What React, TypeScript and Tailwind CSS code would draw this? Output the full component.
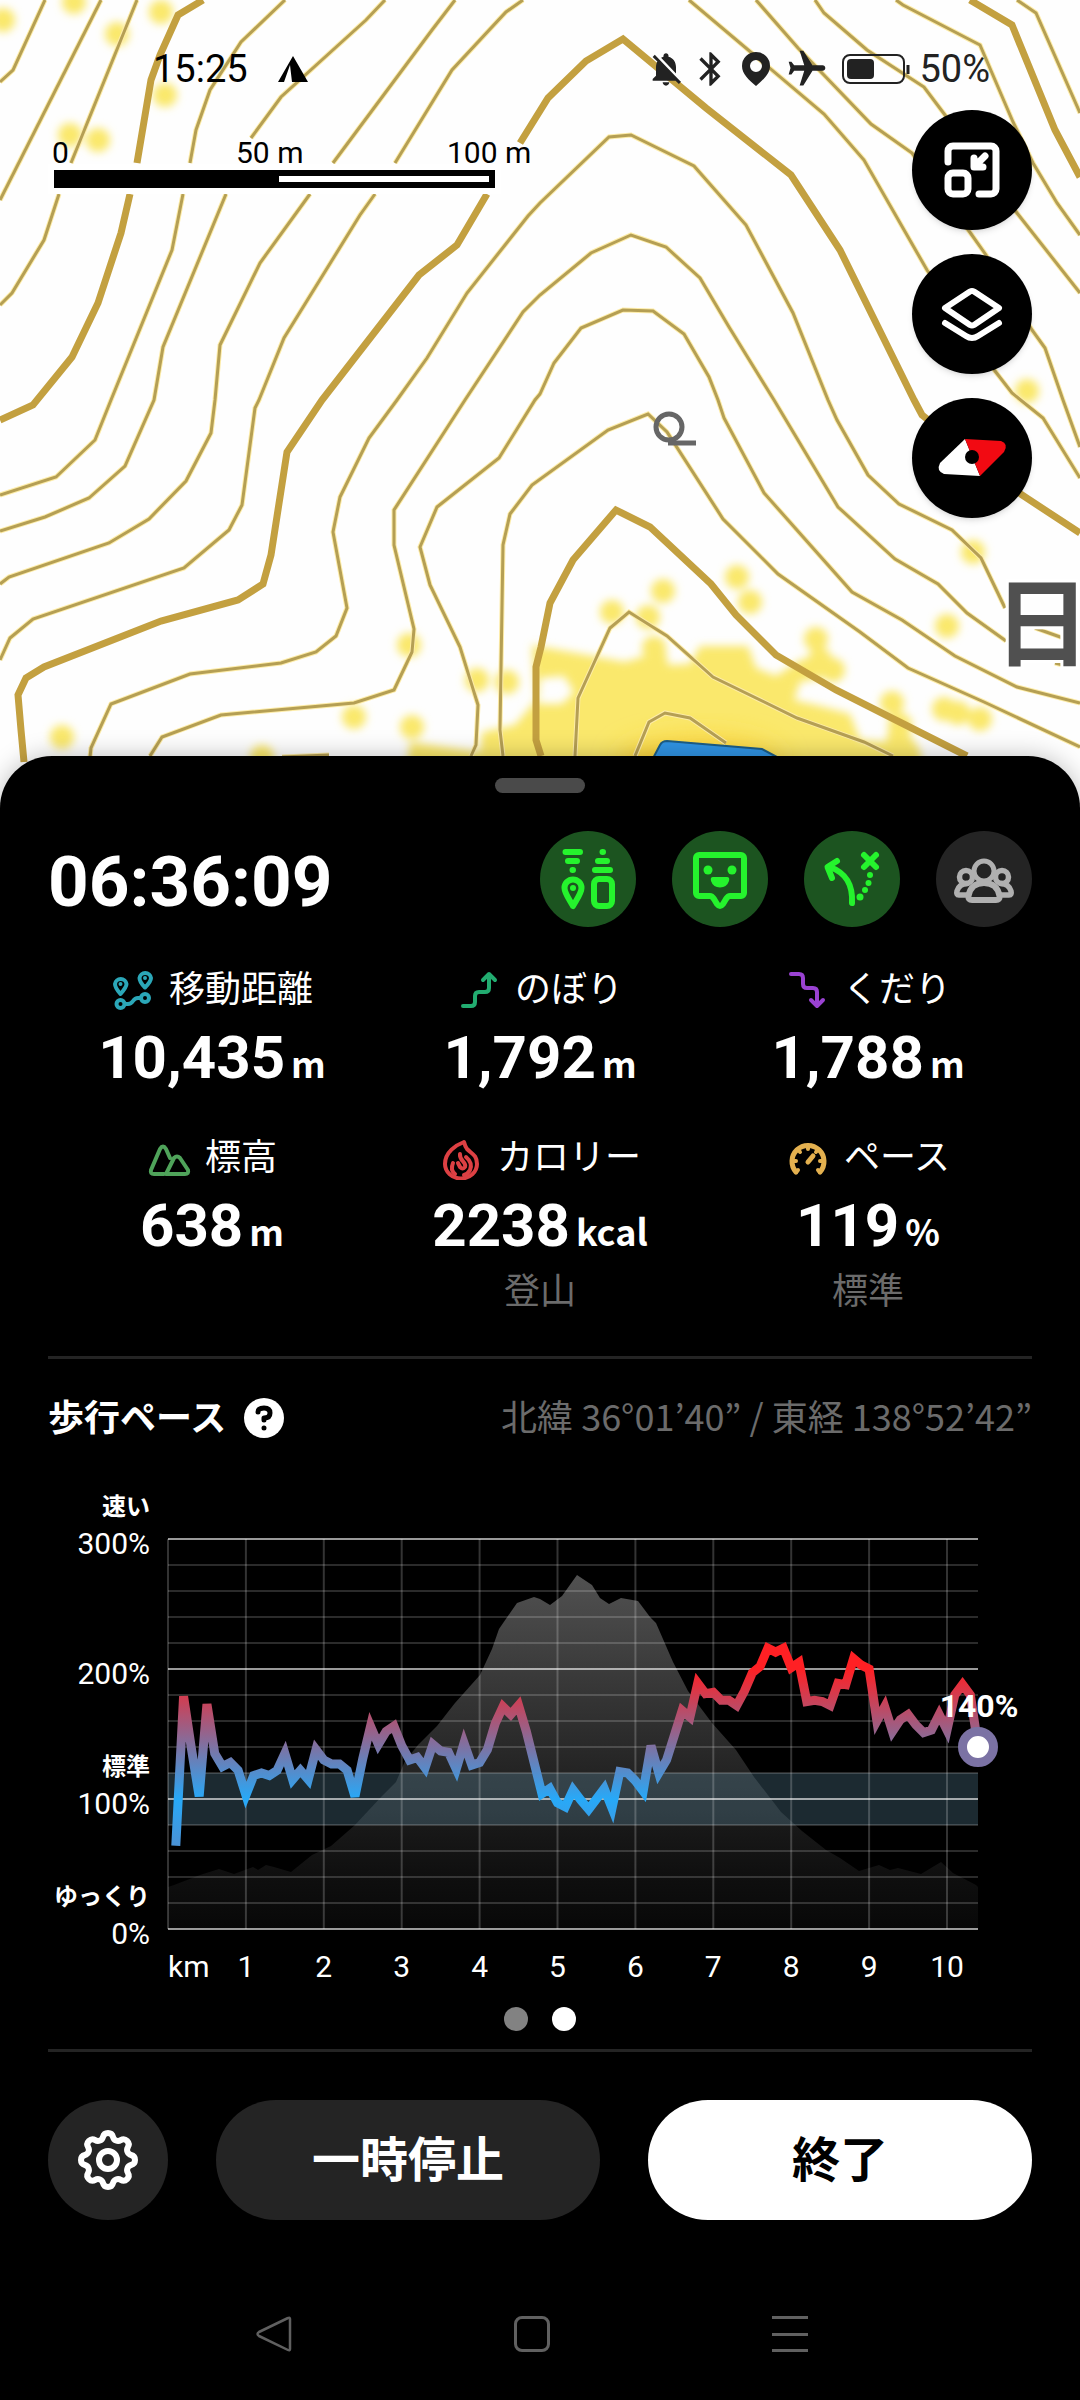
import type { ReactNode } from "react";
import { MdBluetooth, MdFlight, MdNotificationsOff } from "react-icons/md";
import { TbSettings } from "react-icons/tb";

const thinContours = [
    "M45 0L13 70L0 82",
    "M101 0L0 200",
    "M137 0L71 163M59 194L44 240L12 293L0 305",
    "M285 0L241 42L210 90L196 130L190 163M183 194L172 250L111 400L95 440L56 477L0 495",
    "M385 0L366 20L281 97L251 138M226 194L163 347L154 400L125 466L89 498L45 517L0 531",
    "M455 0L432 30L333 163M310 194L260 263L220 345L215 400L211 433L186 481L149 519L109 543L9 577L0 584",
    "M523 0L506 12L452 70L395 163M375 194L360 215L284 338L259 400L255 408L242 505L229 530L184 568L33 619L10 638L0 660",
    "M90 757L91 748L111 704L190 674L281 663L316 652L336 636L347 608L333 532L340 497L369 438L397 400L427 358L467 293L528 216L540 203L609 137L631 135L694 166L746 225L793 313L828 400L837 420L868 475L899 504L952 530L981 558L1005 608",
    "M150 756L162 737L221 715L354 703L394 690L412 652L414 629L394 545L394 510L465 400L523 312L540 295L591 253L631 235L666 247L700 278L729 327L774 400L838 507L895 559L938 584L967 613L1006 641M1035 628L1063 638",
    "M471 756L476 745L478 705L460 647L430 585L420 547L437 507L499 458L535 400L540 394L554 363L581 328L623 310L653 311L684 334L709 377L718 400L724 418L764 493L852 592L902 620L955 656L1017 687L1080 703",
    "M503 756L500 730L503 545L510 514L532 485L608 430L648 414L667 432L723 519L778 574L860 632L908 668L984 702L1080 747",
    "M575 756L578 698L610 628L629 612L667 636L713 677L797 718L864 742L893 756",
    "M635 756L649 722L665 713L690 718L726 743",
    "M689 0L824 114L864 160L927 270L995 371L1012 393L1043 418L1080 478",
    "M756 0L798 48L871 124L912 153L969 231L986 255L1032 330L1045 348L1063 400L1080 447",
    "M815 0L824 13L867 50L924 87L945 115L1017 213L1080 293",
    "M896 0L903 5L980 45L1013 122L1033 163L1057 203L1080 235",
    "M1017 0L1036 13L1080 113",
    "M282 757L329 755M1055 663L1063 665",
];

const thickContours = [
    "M203 0L178 15L160 55L151 80L137 163M130 194L121 233L98 303L72 357L33 405L0 420",
    "M24 762L21 730L18 695L26 678L44 667L161 621L238 600L263 584L271 555L287 452L322 400L419 275L457 245L487 194M520 143L548 98L586 61L623 39L706 108L791 175L840 250L914 400L922 415L1022 495L1080 533",
    "M541 756L536 740L536 667L541 647L550 603L573 560L616 510L650 527L711 584L736 615L776 655L836 690L967 756",
    "M970 0L1012 25L1055 130L1080 177",
];

const trackSpots = [
    [3, 20], [74, 2], [117, 34], [161, 12], [165, 95], [70, 135], [98, 140], [409, 645], [354, 717],
    [62, 737], [412, 727], [477, 680], [507, 682], [262, 757], [663, 591], [737, 577], [750, 602],
    [816, 639], [947, 626], [973, 552], [892, 703], [900, 725], [944, 709], [958, 713], [980, 719],
    [1027, 391], [612, 612], [648, 617], [654, 648], [833, 670], [820, 660],
];

function MapCanvas() {
    return (
        <svg
            className="absolute inset-0 h-full w-full"
            viewBox="0 0 1080 820"
            preserveAspectRatio="xMidYMin slice"
            aria-hidden="true"
        >
            <defs>
                <filter id="soft" x="-20%" y="-20%" width="140%" height="140%">
                    <feGaussianBlur stdDeviation="4" />
                </filter>
                <filter id="glow" x="-50%" y="-50%" width="200%" height="200%">
                    <feGaussianBlur stdDeviation="14" />
                </filter>
            </defs>
            <g fill="#fae86c" filter="url(#soft)">
                {trackSpots.map(([x, y]) => (
                    <circle key={`${x}-${y}`} cx={x} cy={y} r="12" />
                ))}
                <path
                    fillRule="evenodd"
                    d="M410 742L480 752L482 732L515 725L536 700L532 645L592 656L625 662L645 656L652 640L664 640L668 665L690 664L700 646L748 646L756 668L776 676L800 660L830 652L832 676L800 682L794 700L820 706L850 714L860 740L886 742L892 716L906 730L920 750L930 820H400zM540 678L564 676L574 692L562 704L538 704z"
                />
            </g>
            <ellipse cx="700" cy="765" rx="80" ry="26" fill="#fbd030" filter="url(#glow)" />
            <g fill="none" stroke="#fdeca8" strokeWidth="5">
                {thinContours.map((d) => <path key={d} d={d} />)}
            </g>
            <g fill="none" stroke="#b59f54" strokeWidth="3">
                {thinContours.map((d) => <path key={d} d={d} />)}
            </g>
            <g fill="none" stroke="#c3a040" strokeWidth="7">
                {thickContours.map((d) => <path key={d} d={d} />)}
            </g>
            <path d="M650 764L660 745Q662 741 667 741L762 749L790 764z" fill="#2f93e3" stroke="#1c5d86" strokeWidth="2" />
            <g fill="none" stroke="#666" strokeWidth="5">
                <circle cx="669" cy="427" r="13" />
                <path d="M668 443H696" />
            </g>
            <text
                x="1042"
                y="658"
                textAnchor="middle"
                fontSize="96"
                fontWeight="700"
                fill="#505050"
                stroke="#fff"
                strokeWidth="6"
                paintOrder="stroke"
                className="font-['Noto_Sans_CJK_JP',sans-serif]"
            >
                日
            </text>
        </svg>
    );
}

function StatusBar() {
    return (
        <header className="flex h-[110px] items-center justify-between pt-7 pr-[90px] pl-[153px] text-[38px] text-black">
            <div className="flex items-center gap-[30px]">
                <span>15:25</span>
                <svg width="30" height="27" viewBox="0 0 30 27" aria-hidden="true">
                    <path d="M15 0L30 26H14L12 9L6 26H0z" />
                </svg>
            </div>
            <div className="flex items-center gap-[5px] text-[#222]">
                <MdNotificationsOff size={40} />
                <MdBluetooth size={40} />
                <svg width="40" height="40" viewBox="0 0 40 40" fill="currentColor" aria-hidden="true">
                    <path fillRule="evenodd" d="M20 3a14 14 0 0 1 14 14c0 8-7 14-14 20C13 31 6 25 6 17A14 14 0 0 1 20 3zm0 8a6 6 0 1 0 0 12a6 6 0 0 0 0-12z" />
                </svg>
                <MdFlight size={44} className="ml-1 rotate-90" />
                <svg className="ml-2" width="68" height="30" viewBox="0 0 68 30" fill="none" stroke="currentColor" aria-hidden="true">
                    <rect x="1" y="1" width="61" height="28" rx="7" strokeWidth="2" />
                    <path d="M66 11V20" strokeWidth="3" />
                    <rect x="5" y="5" width="27" height="20" rx="4" fill="currentColor" stroke="none" />
                </svg>
                <span className="ml-1">50%</span>
            </div>
        </header>
    );
}

function ScaleBar() {
    return (
        <div className="ml-[52px] text-3xl leading-[34px] text-black">
            <div className="flex">
                <span className="w-[184px]">0</span>
                <span className="w-[211px]">50 m</span>
                <span>100 m</span>
            </div>
            <div className="ml-0.5 flex h-[18px] w-[441px] justify-end bg-black p-1.5 ring-6 ring-white">
                <div className="w-[210px] bg-white" />
            </div>
        </div>
    );
}

function MapButton({ label, children }: { label: string; children: ReactNode }) {
    return (
        <button type="button" aria-label={label} className="size-[120px] rounded-full bg-black shadow-md">
            <svg viewBox="0 0 120 120" fill="none" stroke="#fff" strokeWidth="7" strokeLinecap="round" strokeLinejoin="round">
                {children}
            </svg>
        </button>
    );
}

function MapButtons() {
    return (
        <div className="flex flex-col gap-6 pr-12">
            <MapButton label="縮小">
                <path d="M36 52V41a5 5 0 0 1 5-5H79a5 5 0 0 1 5 5V79a5 5 0 0 1-5 5H67" />
                <rect x="36" y="63" width="20" height="21" rx="5" />
                <path d="M73 46L63 56M62 48V57H71" />
            </MapButton>
            <MapButton label="レイヤー">
                <path d="M58 37.5a4 4 0 0 1 4 0L87 54L62 71a4 4 0 0 1-4 0L33 54z" strokeWidth="6" />
                <path d="M33 69L54 82q6 4 12 0L87 69" strokeWidth="6" />
            </MapButton>
            <MapButton label="コンパス">
                <g stroke="none">
                    <path d="M53 41L68 78L32 76q-8-3-4-11z" fill="#fff" />
                    <path d="M53 41L89 43q8 3 3 11L68 78z" fill="#f20a12" />
                    <circle cx="60" cy="59" r="7" fill="#000" />
                </g>
            </MapButton>
        </div>
    );
}

function ModeButton({ label, active = true, children }: { label: string; active?: boolean; children: ReactNode }) {
    return (
        <button
            type="button"
            aria-label={label}
            className={`size-24 rounded-full ${active ? "bg-[#1c5420] text-[#25f32d]" : "bg-[#242424] text-[#b0b0b0]"}`}
        >
            <svg viewBox="0 0 96 96" fill="none" stroke="currentColor" strokeWidth="6" strokeLinecap="round" strokeLinejoin="round">
                {children}
            </svg>
        </button>
    );
}

function Stat({ label, value, unit, note, icon }: { label: string; value: string; unit: string; note?: string; icon: ReactNode }) {
    return (
        <div className="flex flex-col items-center">
            <div className="flex h-[54px] items-center gap-3.5 text-4xl">
                <svg width="44" height="44" viewBox="0 0 44 44" fill="none" strokeWidth="4" strokeLinecap="round" strokeLinejoin="round" aria-hidden="true">
                    {icon}
                </svg>
                {label}
            </div>
            <div className="mt-[5px] flex h-[72px] items-baseline gap-1.5 text-6xl leading-[72px] font-bold">
                {value}
                <span className="font-['Noto_Sans_CJK_JP',sans-serif] text-4xl leading-none">{unit}</span>
            </div>
            {note && <p className="mt-[3px] text-4xl leading-[54px] text-[#6b6b6b]">{note}</p>}
        </div>
    );
}

// pace in percent of the standard time, one sample each 0.1 km
const pace = [
    64, 179, 139, 102, 173, 135, 125, 128, 122, 103, 118, 120, 118, 122, 135, 115, 122, 115, 138, 130,
    127, 127, 122, 102, 131, 156, 142, 152, 156, 141, 130, 132, 124, 142, 137, 136, 123, 143, 126, 128,
    138, 158, 171, 165, 172, 152, 128, 104, 108, 97, 94, 107, 99, 92, 100, 108, 93, 121, 120, 114,
    106, 141, 120, 130, 149, 168, 163, 189, 181, 182, 176, 176, 172, 183, 197, 202, 216, 213, 216, 201,
    205, 175, 176, 175, 172, 189, 188, 208, 203, 200, 160, 171, 152, 161, 165, 157, 151, 153, 165, 153,
    180, 188, 180, 140,
];

const elevation =
    "M120 449V407L126 405L152 395L171 389L186 394L205 387L210 390L218 385L226 387L243 392L264 375L283 366L307 345L334 316L348 302L357 281L370 265L389 246L407 223L432 195L444 169L451 149L469 123L486 117L492 119L502 125L514 116L529 95L544 105L552 118L561 124L573 118L590 121L602 137L608 143L625 182L640 211L664 243L688 270L706 297L733 332L754 351L778 370L792 378L811 391L831 385L842 390L850 388L873 394L893 382L905 393L928 405L930 407V449z";

const chartLeft = 120;
const chartRight = 930;
const toX = (km: number) => chartLeft + km * 77.9;
const toY = (percent: number) => 449 - percent * 1.3;

function PaceChart() {
    const line = pace.map((p, i) => `${toX((i + 1) / 10)},${toY(p)}`).join(" ");
    const rows = Array.from({ length: 16 }, (_, i) => i * 20);
    const kms = Array.from({ length: 11 }, (_, i) => i);

    return (
        <svg className="mt-[35px] w-full" viewBox="0 0 984 505" fill="#fff" fontSize="30" role="img" aria-label="歩行ペース">
            <defs>
                <linearGradient id="hill" x1="0" y1="95" x2="0" y2="449" gradientUnits="userSpaceOnUse">
                    <stop offset="0" stopColor="#515151" />
                    <stop offset="0.6" stopColor="#202020" />
                    <stop offset="0.85" stopColor="#0f0f0f" />
                    <stop offset="1" stopColor="#080808" />
                </linearGradient>
                <linearGradient id="pace" x1="0" y1={toY(200)} x2="0" y2={toY(0)} gradientUnits="userSpaceOnUse">
                    <stop offset="0" stopColor="#ff2024" />
                    <stop offset="0.5" stopColor="#27a9f8" />
                    <stop offset="1" stopColor="#8a6a98" />
                </linearGradient>
            </defs>
            <path d={elevation} fill="url(#hill)" />
            <rect x={chartLeft} y={toY(120)} width={chartRight - chartLeft} height={toY(80) - toY(120)} fill="#70a8c4" fillOpacity="0.25" />
            <g stroke="#fff" strokeWidth="2">
                {rows.map((p) => (
                    <path key={p} d={`M${chartLeft} ${toY(p)}H${chartRight}`} strokeOpacity={p % 100 ? 0.17 : 0.6} />
                ))}
                {kms.map((km) => (
                    <path key={km} d={`M${toX(km)} ${toY(300)}V${toY(0)}`} strokeOpacity="0.2" />
                ))}
            </g>
            <polyline points={line} fill="none" stroke="url(#pace)" strokeWidth="9" />
            <g textAnchor="end">
                {[300, 200, 100, 0].map((p) => (
                    <text key={p} x="102" y={toY(p) + 15}>{p}%</text>
                ))}
                <g fontSize="24" fontWeight="700" className="font-['Noto_Sans_CJK_JP',sans-serif]">
                    <text x="102" y="35">速い</text>
                    <text x="102" y="295">標準</text>
                    <text x="102" y="425">ゆっくり</text>
                </g>
            </g>
            <text x="120" y="497">km</text>
            <g textAnchor="middle">
                {kms.slice(1).map((km) => (
                    <text key={km} x={toX(km)} y="497">{km}</text>
                ))}
                <text x="931" y="237" fontSize="32" fontWeight="700">140%</text>
            </g>
            <circle cx={chartRight} cy={toY(140)} r="15.5" fill="#fff" stroke="#7b72a4" strokeWidth="9" />
        </svg>
    );
}

export default function App() {
    return (
        <main className="min-h-screen bg-black font-['Roboto','Noto_Sans_CJK_JP',sans-serif] text-white">
            <section className="relative h-[820px] overflow-hidden bg-[#fefefe]">
                <MapCanvas />
                <div className="relative">
                    <StatusBar />
                    <div className="flex items-start justify-between">
                        <div className="pt-[26px]">
                            <ScaleBar />
                        </div>
                        <MapButtons />
                    </div>
                </div>
            </section>

            <section className="relative -mt-16 rounded-t-[52px] bg-black px-12 pt-[22px] shadow-[0_0_24px_rgba(0,0,0,0.25)]">
                <div className="mx-auto h-[15px] w-[90px] rounded-full bg-[#4a4a4a]" />

                <div className="mt-[38px] flex items-center justify-between">
                    <p className="pt-1.5 text-[71px] leading-[90px] font-bold">06:36:09</p>
                    <div className="flex gap-9">
                        <ModeButton label="みまもり">
                            <path d="M25.5 21H40M28 30H37M32.5 39H33M62.5 21H63M58 30H67M55 39H70" />
                            <path d="M33 75C29 68 24.5 62 24.5 57a8.5 8.5 0 0 1 17 0C41.5 62 37 68 33 75z" />
                            <circle cx="33" cy="57" r="3" fill="currentColor" stroke="none" />
                            <rect x="54" y="48" width="18" height="27" rx="5" />
                        </ModeButton>
                        <ModeButton label="フィールドメモ">
                            <path d="M27 24H69a3 3 0 0 1 3 3V62a3 3 0 0 1-3 3H58Q56 65 54 68L51 73Q48 77 45 73L42 68Q40 65 38 65H27a3 3 0 0 1-3-3V27a3 3 0 0 1 3-3z" />
                            <g fill="currentColor" stroke="none">
                                <circle cx="36" cy="39" r="4.5" />
                                <circle cx="60" cy="39" r="4.5" />
                                <path d="M41 46H55q3 0 2 4a9.5 9.5 0 0 1-18 0q-1-4 2-4z" />
                            </g>
                        </ModeButton>
                        <ModeButton label="ルート外れ">
                            <path d="M48 72C49 53 42 42 26 36M33 30L23.5 36L28 47M60 24L72 36M72 24L60 36" />
                            <g fill="currentColor" stroke="none">
                                <circle cx="56" cy="66" r="3.5" />
                                <circle cx="61" cy="59" r="3" />
                                <circle cx="64.5" cy="52" r="3" />
                                <circle cx="66" cy="44" r="3" />
                            </g>
                        </ModeButton>
                        <ModeButton label="グループ" active={false}>
                            <g strokeWidth="5.5">
                                <circle cx="30" cy="46" r="6.5" />
                                <circle cx="66" cy="46" r="6.5" />
                                <path d="M31 64H23q-3 0-2-4q2-7 10-7.5M65 64H73q3 0 2-4q-2-7-10-7.5" />
                            </g>
                            <circle cx="48" cy="40" r="10" strokeWidth="5" fill="#242424" />
                            <path d="M36 69H60q4 0 3.5-4C62 56 56 52 48 52S34 56 32.5 65Q32 69 36 69z" fill="#242424" />
                        </ModeButton>
                    </div>
                </div>

                <div className="mt-9 grid grid-cols-3 gap-y-[37px]">
                    <Stat label="移動距離" value="10,435" unit="m" icon={
                        <g stroke="#2ba7b8">
                            <path d="M9.5 26C6 22 4 19 4 16a5.8 5.8 0 0 1 11.5 0C15.5 19 13 22 9.5 26zM34 19.5C30.5 16 28.5 13 28.5 10A5.8 5.8 0 0 1 40 10C40 13 37.5 16 34 19.5z" />
                            <circle cx="9.5" cy="16" r="1" strokeWidth="2" />
                            <circle cx="34" cy="10" r="1" strokeWidth="2" />
                            <circle cx="9.5" cy="36" r="4" />
                            <circle cx="34" cy="30" r="4" />
                            <path d="M14 36h3c6 0 4-6 10-6h2" />
                        </g>
                    } />
                    <Stat label="のぼり" value="1,792" unit="m" icon={
                        <path d="M6 38h8q4 0 4-4v-6q0-4 4-4h6q4 0 4-4V6M26 12l6-6l6 6" stroke="#22ac70" />
                    } />
                    <Stat label="くだり" value="1,788" unit="m" icon={
                        <path d="M6 6h8q4 0 4 4v6q0 4 4 4h6q4 0 4 4v13M26 32l6 6l6-6" stroke="#9a42d2" />
                    } />
                    <Stat label="標高" value="638" unit="m" icon={
                        <path d="M17 38H7q-4 0-3-4L13 13q3-5 6 0l4 9M20 38H38q4 0 3-4L33 22q-3-3-6 0L19 38" stroke="#4fa35a" />
                    } />
                    <Stat label="カロリー" value="2238" unit="kcal" note="登山" icon={
                        <g stroke="#dd4043">
                            <path d="M25 6C17 9 6 16 6 28a16 14.5 0 0 0 32 0C38 19 33 18 28 13Q26 10 25 6z" />
                            <path d="M21 18C20 25 28 26 26 31Q24 34 21 31L19 27M14 27Q11 34 16 38M27 21Q34 27 31 34Q29 38 25 39" />
                        </g>
                    } />
                    <Stat label="ペース" value="119" unit="%" note="標準" icon={
                        <g stroke="#e3b04f">
                            <path d="M10 36A16 16 0 1 1 34 36" strokeWidth="5" />
                            <path d="M22 10V13M12 13L14 16M32 13L30 16M7 25H10M37 25H34M10 36L12 34M34 36L32 34" />
                            <path d="M27 20L22 26" strokeWidth="5" />
                        </g>
                    } />
                </div>

                <hr className="mt-[37px] border-t-3 border-[#242424]" />

                <div className="mt-8 flex h-[54px] items-center justify-between text-4xl">
                    <div className="flex items-center gap-[18px]">
                        <h2 className="pt-0.5 font-bold">歩行ペース</h2>
                        <button type="button" aria-label="ヘルプ" className="size-10 rounded-full bg-white">
                            <svg viewBox="0 0 40 40" fill="none" stroke="#000" strokeWidth="5" strokeLinecap="round" strokeLinejoin="round">
                                <path d="M14 14Q14 10 20 10Q26 10 26 15T20 20V22M20 30V30" />
                            </svg>
                        </button>
                    </div>
                    <p className="pb-1.5 font-['Noto_Sans_CJK_JP',sans-serif] text-[#6b6b6b]">
                        北緯 36°01’40” / 東経 138°52’42”
                    </p>
                </div>

                <PaceChart />

                <div className="mt-[22px] flex justify-center gap-6">
                    <span className="size-6 rounded-full bg-[#828282]" />
                    <span className="size-6 rounded-full bg-white" />
                </div>

                <hr className="mt-[18px] border-t-3 border-[#242424]" />

                <div className="mt-12 flex gap-12 text-5xl font-bold">
                    <button type="button" aria-label="設定" className="flex size-[120px] shrink-0 items-center justify-center rounded-full bg-[#242424]">
                        <TbSettings size={72} />
                    </button>
                    <button type="button" className="h-[120px] flex-1 rounded-full bg-[#242424] pt-0.5">一時停止</button>
                    <button type="button" className="h-[120px] flex-1 rounded-full bg-white pt-0.5 text-black">終了</button>
                </div>
            </section>

            <nav className="mt-24 grid grid-cols-3 place-items-center pr-[161px] pb-12 pl-[145px] text-[#606060]">
                <button type="button" aria-label="戻る">
                    <svg width="36" height="36" viewBox="0 0 36 36" fill="none" stroke="currentColor" strokeWidth="2.5" strokeLinejoin="round">
                        <path d="M32 2Q34 1 34 3V33Q34 35 32 34L3 20Q0 18 3 16z" />
                    </svg>
                </button>
                <button type="button" aria-label="ホーム" className="size-9 rounded-lg border-3 border-current" />
                <button type="button" aria-label="履歴" className="flex h-9 w-9 flex-col justify-between">
                    <span className="h-[3px] w-full bg-current" />
                    <span className="h-[3px] w-full bg-current" />
                    <span className="h-[3px] w-full bg-current" />
                </button>
            </nav>
        </main>
    );
}
